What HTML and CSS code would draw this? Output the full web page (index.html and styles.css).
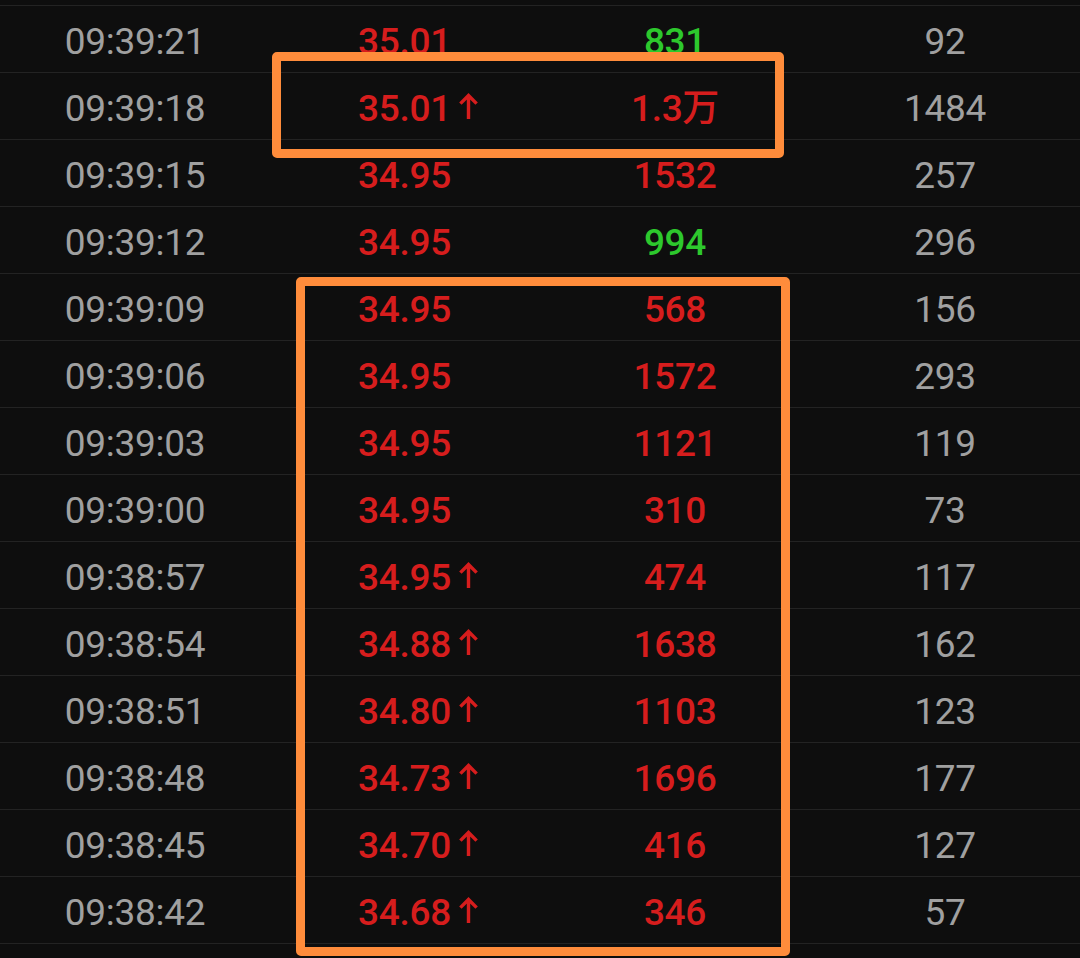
FILE: index.html
```html
<!DOCTYPE html>
<html lang="zh-CN">
<head>
<meta charset="utf-8">
<link rel="stylesheet" href="styles.css">
</head>
<body>
<div class="page">
  <div class="table">
    <div class="row"><span class="c time">09:39:21</span><span class="c price up">35.01</span><span class="c vol up-g">831</span><span class="c cnt">92</span></div>
    <div class="row"><span class="c time">09:39:18</span><span class="c price up">35.01<svg class="arrow" viewBox="0 0 22 27"><path d="M11 2.5V27M2.5 11L11 2.5L19.5 11"/></svg></span><span class="c vol up">1.3万</span><span class="c cnt">1484</span></div>
    <div class="row"><span class="c time">09:39:15</span><span class="c price up">34.95</span><span class="c vol up">1532</span><span class="c cnt">257</span></div>
    <div class="row"><span class="c time">09:39:12</span><span class="c price up">34.95</span><span class="c vol up-g">994</span><span class="c cnt">296</span></div>
    <div class="row"><span class="c time">09:39:09</span><span class="c price up">34.95</span><span class="c vol up">568</span><span class="c cnt">156</span></div>
    <div class="row"><span class="c time">09:39:06</span><span class="c price up">34.95</span><span class="c vol up">1572</span><span class="c cnt">293</span></div>
    <div class="row"><span class="c time">09:39:03</span><span class="c price up">34.95</span><span class="c vol up">1121</span><span class="c cnt">119</span></div>
    <div class="row"><span class="c time">09:39:00</span><span class="c price up">34.95</span><span class="c vol up">310</span><span class="c cnt">73</span></div>
    <div class="row"><span class="c time">09:38:57</span><span class="c price up">34.95<svg class="arrow" viewBox="0 0 22 27"><path d="M11 2.5V27M2.5 11L11 2.5L19.5 11"/></svg></span><span class="c vol up">474</span><span class="c cnt">117</span></div>
    <div class="row"><span class="c time">09:38:54</span><span class="c price up">34.88<svg class="arrow" viewBox="0 0 22 27"><path d="M11 2.5V27M2.5 11L11 2.5L19.5 11"/></svg></span><span class="c vol up">1638</span><span class="c cnt">162</span></div>
    <div class="row"><span class="c time">09:38:51</span><span class="c price up">34.80<svg class="arrow" viewBox="0 0 22 27"><path d="M11 2.5V27M2.5 11L11 2.5L19.5 11"/></svg></span><span class="c vol up">1103</span><span class="c cnt">123</span></div>
    <div class="row"><span class="c time">09:38:48</span><span class="c price up">34.73<svg class="arrow" viewBox="0 0 22 27"><path d="M11 2.5V27M2.5 11L11 2.5L19.5 11"/></svg></span><span class="c vol up">1696</span><span class="c cnt">177</span></div>
    <div class="row"><span class="c time">09:38:45</span><span class="c price up">34.70<svg class="arrow" viewBox="0 0 22 27"><path d="M11 2.5V27M2.5 11L11 2.5L19.5 11"/></svg></span><span class="c vol up">416</span><span class="c cnt">127</span></div>
    <div class="row"><span class="c time">09:38:42</span><span class="c price up">34.68<svg class="arrow" viewBox="0 0 22 27"><path d="M11 2.5V27M2.5 11L11 2.5L19.5 11"/></svg></span><span class="c vol up">346</span><span class="c cnt">57</span></div>
  </div>
  <div class="mark mark-a"></div>
  <div class="mark mark-b"></div>
</div>
</body>
</html>
```

FILE: styles.css
```css
html, body {
  margin: 0;
  padding: 0;
  background: #0e0e0e;
}
.page {
  position: relative;
  width: 1080px;
  height: 958px;
  overflow: hidden;
  background: #0e0e0e;
  font-family: Roboto, "Noto Sans CJK SC", sans-serif;
}
.table {
  padding-top: 5px;
  display: flex;
  flex-direction: column;
}
.row {
  display: grid;
  grid-template-columns: 270px 270px 270px 270px;
  height: 66px;
  border-top: 1px solid #232323;
  align-items: center;
}
.row:last-child {
  border-bottom: 1px solid #232323;
}
.c {
  font-size: 37px;
  line-height: 1;
  padding-top: 4px;
  white-space: nowrap;
  letter-spacing: -0.3px;
}
.time, .cnt {
  color: #a0a0a0;
  text-align: center;
  font-weight: 400;
}
.price {
  padding-left: 88px;
  font-weight: 500;
  display: flex;
  align-items: center;
}
.vol {
  text-align: center;
  font-weight: 500;
}
.up { color: #d61d1d; }
.up-g { color: #2dc82d; }
.arrow {
  width: 21px;
  height: 26px;
  margin-left: 7px;
  margin-top: -4px;
  fill: none;
  stroke: #d61d1d;
  stroke-width: 3.6;
  stroke-linecap: butt;
  stroke-linejoin: miter;
}
.mark {
  position: absolute;
  border: 9px solid #ff8c3b;
  border-radius: 5px;
  box-sizing: border-box;
}
.mark-a {
  left: 272px;
  top: 52px;
  width: 512px;
  height: 106px;
}
.mark-b {
  left: 296px;
  top: 277px;
  width: 494px;
  height: 679px;
}
```
